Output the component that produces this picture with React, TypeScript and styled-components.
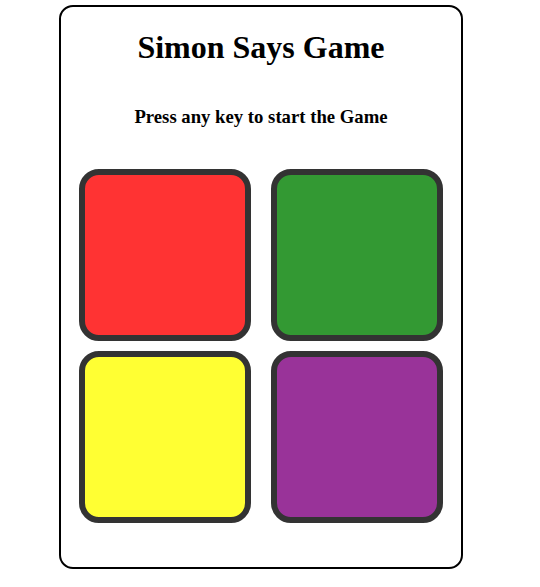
import React from "react"
import styled, { createGlobalStyle } from "styled-components"

const GlobalStyle = createGlobalStyle`
  body {
    margin: 0;
    background: #fff;
    font-family: "Liberation Serif", "Times New Roman", serif;
  }
`

const Page = styled.div`
  padding: 5px 0 0 59px;
`

const Card = styled.div`
  width: 400px;
  height: 560px;
  border: 2px solid #000;
  border-radius: 14px;
  display: flex;
  flex-direction: column;
  align-items: center;
`

const Title = styled.h1`
  font-size: 32px;
  font-weight: bold;
  margin: 22px 0 0;
`

const Subtitle = styled.h3`
  font-size: 18.72px;
  font-weight: bold;
  margin: 40px 0 0;
`

const Board = styled.div`
  display: grid;
  grid-template-columns: repeat(2, 172px);
  column-gap: 20px;
  row-gap: 10px;
  margin-top: 41px;
`

const Pad = styled.div<{ $color: string }>`
  box-sizing: border-box;
  width: 172px;
  height: 172px;
  border: 6px solid #333;
  border-radius: 20px;
  background: ${(p) => p.$color};
`

const colors = ["#ff3333", "#339933", "#ffff33", "#993399"]

const App: React.FC = () => {
  return (
    <>
      <GlobalStyle />
      <Page>
        <Card>
          <Title>Simon Says Game</Title>
          <Subtitle>Press any key to start the Game</Subtitle>
          <Board>
            {colors.map((c, i) => (
              <Pad key={i} $color={c} />
            ))}
          </Board>
        </Card>
      </Page>
    </>
  )
}

export default App
